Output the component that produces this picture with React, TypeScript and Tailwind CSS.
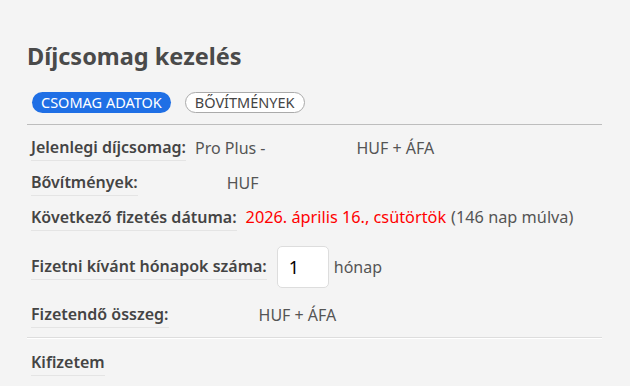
export default function App() {
  return (
    <div
      className="min-h-[386px] w-full bg-[#f4f4f4] text-[#555]"
      style={{ fontFamily: '"Noto Sans", "Open Sans", sans-serif' }}
    >
      <div className="ml-[27px] w-[575px] pt-[40px]">
        {/* Heading */}
        <h1 className="h-[32px] text-[23.5px] font-bold leading-[32px] text-[#4a4a4a]">
          Díjcsomag kezelés
        </h1>

        {/* Tabs */}
        <div className="mt-[20px] flex items-center gap-[14px] pl-[5px]">
          <span className="flex h-[21px] items-center rounded-full bg-[#1f6fe5] px-[9px] text-[14.5px] text-white">
            CSOMAG ADATOK
          </span>
          <span className="flex h-[21px] items-center rounded-full border border-[#aaa] bg-white px-[9px] text-[14.5px] text-[#444]">
            BŐVÍTMÉNYEK
          </span>
        </div>

        <div className="mt-[11px] border-t border-[#bdbdbd]" />

        {/* Rows */}
        <div className="mt-[6px] pl-[4px] text-[16px]">
          <div className="flex h-[34px] items-center">
            <span className="border-b border-[#e4e4e4] pb-[1px] font-semibold text-[#444]">
              Jelenlegi díjcsomag:
            </span>
            <span className="ml-[9px]">Pro Plus -</span>
            <span className="ml-[91px]">HUF + ÁFA</span>
          </div>

          <div className="flex h-[35px] items-center">
            <span className="border-b border-[#e4e4e4] pb-[1px] font-semibold text-[#444]">
              Bővítmények:
            </span>
            <span className="ml-[89px]">HUF</span>
          </div>

          <div className="flex h-[35px] items-center">
            <span className="border-b border-[#e4e4e4] pb-[1px] font-semibold text-[#444]">
              Következő fizetés dátuma:
            </span>
            <span className="ml-[9px] text-[16.3px] text-[#f00]">2026. április 16., csütörtök</span>
            <span className="ml-[5px] text-[16.3px]">(146 nap múlva)</span>
          </div>

          <div className="flex h-[64px] items-center">
            <span className="border-b border-[#e4e4e4] pb-[1px] font-semibold text-[#444]">
              Fizetni kívánt hónapok száma:
            </span>
            <input
              type="text"
              defaultValue="1"
              className="ml-[10px] h-[42px] w-[52px] rounded-[5px] border border-[#ddd] bg-white px-[11px] text-[18px] text-black outline-none"
            />
            <span className="ml-[5px]">hónap</span>
          </div>

          <div className="flex h-[32px] items-center">
            <span className="border-b border-[#e4e4e4] pb-[1px] font-semibold text-[#444]">
              Fizetendő összeg:
            </span>
            <span className="ml-[90px]">HUF + ÁFA</span>
          </div>
        </div>

        <div className="mt-[6px] border-t border-b border-t-[#ddd] border-b-white" />

        <div className="flex h-[47px] items-center pl-[4px] text-[16px]">
          <span className="border-b border-[#e4e4e4] pb-[1px] font-semibold text-[#444]">
            Kifizetem
          </span>
        </div>
      </div>
    </div>
  );
}
